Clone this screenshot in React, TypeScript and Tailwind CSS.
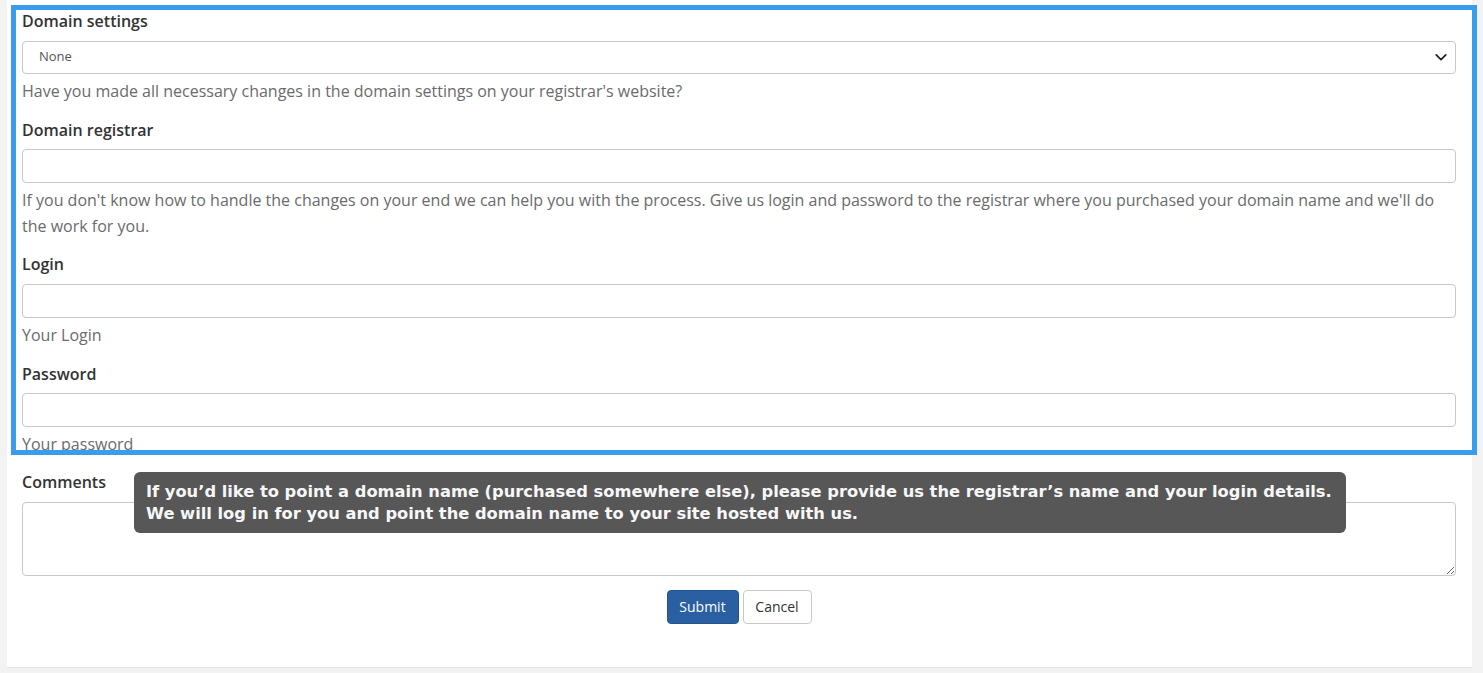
import React, { useState } from "react";

const font = { fontFamily: '"Open Sans", "Noto Sans", sans-serif' };

const Label = ({ children }: { children: React.ReactNode }) => (
  <label className="block text-[16px] leading-[25.6px] font-semibold text-[#333] mb-[6px]">{children}</label>
);

const Help = ({ children }: { children: React.ReactNode }) => (
  <p className="mt-[4px] text-[16px] leading-[26px] text-[#6b6b6b]">{children}</p>
);

const inputCls =
  "block w-full h-[34px] rounded-[4px] border border-[#c8c8c8] bg-white px-3 text-[14px] text-[#555] outline-none";

export default function App() {
  const [domain, setDomain] = useState("None");
  const [registrar, setRegistrar] = useState("");
  const [login, setLogin] = useState("");
  const [password, setPassword] = useState("");
  const [comments, setComments] = useState("");

  return (
    <div className="min-h-[673px] bg-[#f3f3f3]" style={font}>
      <div className="relative ml-[7px] w-[1465px] bg-white border-b border-[#e2e2e2] pl-[15px] pr-[16px] pb-[43px]">
        {/* подсвеченная область с прокруткой */}
        <div className="-ml-[11px] -mr-[21px] pt-[5px]">
          <div className="h-[450px] border-[5px] border-[#3a9cec] overflow-hidden pl-[6px] pr-[16px]">
            <div className="mt-[-1px]">
              <Label>Domain settings</Label>
              <div className="relative">
                <select
                  value={domain}
                  onChange={(e) => setDomain(e.target.value)}
                  className="block w-full h-[33px] appearance-none rounded-[4px] border border-[#c8c8c8] bg-white pl-[16px] text-[13px] text-[#555] outline-none"
                >
                  <option>None</option>
                  <option>Yes</option>
                  <option>No</option>
                </select>
                <span className="pointer-events-none absolute right-[8px] top-1/2 -translate-y-1/2 text-[#222]" aria-hidden>
                  <svg width="14" height="14" viewBox="0 0 16 16">
                    <path d="M2.5 5.5 8 11l5.5-5.5" fill="none" stroke="currentColor" strokeWidth="2" strokeLinecap="round" strokeLinejoin="round" />
                  </svg>
                </span>
              </div>
              <Help>Have you made all necessary changes in the domain settings on your registrar's website?</Help>
            </div>

            <div className="mt-[14px]">
              <Label>Domain registrar</Label>
              <input value={registrar} onChange={(e) => setRegistrar(e.target.value)} className={inputCls} />
              <Help>
                If you don't know how to handle the changes on your end we can help you with the process. Give us login and password to the registrar where you purchased your domain name and we'll do the work for you.
              </Help>
            </div>

            <div className="mt-[13px]">
              <Label>Login</Label>
              <input value={login} onChange={(e) => setLogin(e.target.value)} className={inputCls} />
              <Help>Your Login</Help>
            </div>

            <div className="mt-[14px]">
              <Label>Password</Label>
              <input type="password" value={password} onChange={(e) => setPassword(e.target.value)} className={inputCls} />
              <Help>Your password</Help>
            </div>
          </div>
        </div>

        <div className="mt-[15px]">
          <Label>Comments</Label>
          <textarea
            value={comments}
            onChange={(e) => setComments(e.target.value)}
            className="block w-full h-[74px] rounded-[4px] border border-[#c8c8c8] bg-white px-3 py-2 text-[14px] text-[#555] outline-none"
          />
        </div>

        <div className="mt-[14px] flex justify-center gap-[4px]">
          <button type="button" className="h-[34px] w-[72px] rounded-[4px] bg-[#2a5fa2] text-[14px] text-white border border-[#24548f]">
            Submit
          </button>
          <button type="button" className="h-[34px] w-[69px] rounded-[4px] bg-white text-[14px] text-[#333] border border-[#c8c8c8]">
            Cancel
          </button>
        </div>

        {/* всплывающая подсказка */}
        <div
          className="absolute left-[127px] top-[472px] w-[1212px] rounded-[6px] bg-[#575757] pl-[12px] pr-[4px] pt-[9px] pb-[8px] text-[16.3px] leading-[22px] font-bold text-[#f7f7f7]"
          style={{ fontFamily: '"DejaVu Sans", Verdana, sans-serif' }}
        >
          <div className="whitespace-nowrap">If you’d like to point a domain name (purchased somewhere else), please provide us the registrar’s name and your login details.</div>
          <div className="whitespace-nowrap">We will log in for you and point the domain name to your site hosted with us.</div>
        </div>
      </div>
    </div>
  );
}
